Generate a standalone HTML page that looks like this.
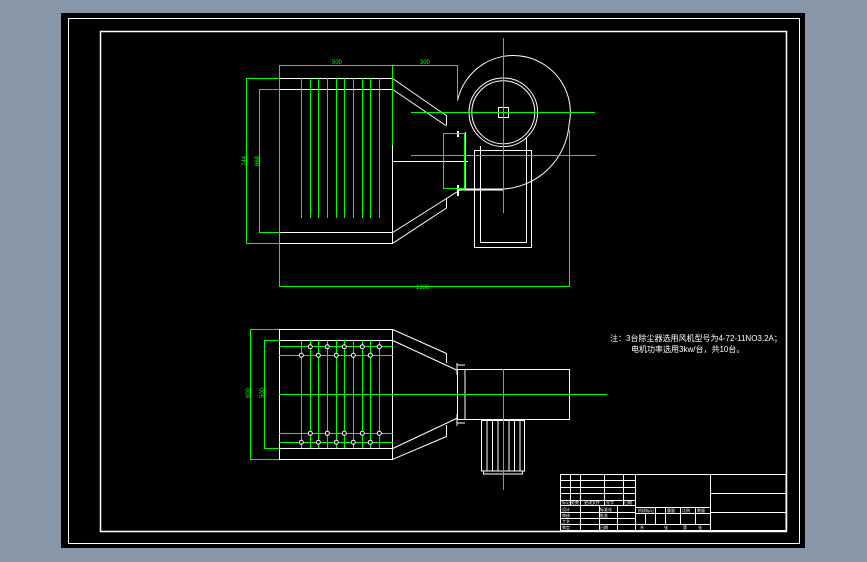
<!DOCTYPE html>
<html><head><meta charset="utf-8"><style>
html,body{margin:0;padding:0;background:#8a97a8;}
svg{display:block}
text{font-family:"Liberation Sans","Noto Sans CJK SC",sans-serif;}
</style></head><body>
<svg width="867" height="562" viewBox="0 0 867 562" xmlns="http://www.w3.org/2000/svg">
<rect x="0" y="0" width="867" height="562" fill="#8a97a8"/>
<rect x="61" y="13" width="744" height="535" fill="#000"/>
<g fill="none" stroke="#fff" stroke-width="1">
<rect x="68.5" y="18.5" width="731" height="525" />
</g>
<g fill="none" stroke="#fff" stroke-width="1.5">
<rect x="100.5" y="31.5" width="686" height="500"/>
</g>

<!-- TOP VIEW -->
<g fill="none" stroke="#fff" stroke-width="1">
<rect x="279.5" y="78.5" width="113" height="165"/>
<line x1="279" y1="89.5" x2="393" y2="89.5"/>
<line x1="279" y1="232.5" x2="393" y2="232.5"/>
<polyline points="392.7,78.5 441,112 446.5,115.5 446.5,125"/>
<polyline points="392.7,89.5 446.5,126"/>
<polyline points="392.7,243.3 446.5,208 446.5,198"/>
<polyline points="392.7,232.5 460,190"/>
<line x1="392.7" y1="161.5" x2="468" y2="161.5"/>
<line x1="465.5" y1="132" x2="465.5" y2="190"/>
<line x1="458" y1="131" x2="458" y2="137" stroke-width="2"/>
<line x1="458" y1="185" x2="458" y2="196" stroke-width="2"/>
<line x1="458" y1="189.5" x2="503" y2="189.5" stroke-width="2"/>
<path d="M457.7,100 A56,56 0 0,1 569,125 A70,70 0 0,1 503,189" />
<circle cx="503.3" cy="112.3" r="34.3"/>
<circle cx="503.3" cy="112.3" r="31.5"/>
<rect x="498.5" y="107.5" width="10" height="10"/>
<rect x="474.5" y="150.5" width="57" height="97"/>
<polyline points="480.5,146 480.5,242.5 526.5,242.5 526.5,138"/>
</g>
<g fill="none" stroke="#0f0" stroke-width="1">
<line x1="301.5" y1="78" x2="301.5" y2="218"/>
<line x1="310.5" y1="78" x2="310.5" y2="218"/>
<line x1="318.5" y1="78" x2="318.5" y2="218"/>
<line x1="327.5" y1="78" x2="327.5" y2="218"/>
<line x1="336.5" y1="78" x2="336.5" y2="218"/>
<line x1="344.5" y1="78" x2="344.5" y2="218"/>
<line x1="353.5" y1="78" x2="353.5" y2="218"/>
<line x1="362.5" y1="78" x2="362.5" y2="218"/>
<line x1="370.5" y1="78" x2="370.5" y2="218"/>
<line x1="379.5" y1="78" x2="379.5" y2="218"/>
<line x1="279" y1="65.5" x2="458" y2="65.5"/>
<line x1="279.5" y1="65" x2="279.5" y2="286"/>
<line x1="392.5" y1="65" x2="392.5" y2="145"/>
<line x1="457.5" y1="65" x2="457.5" y2="101"/>
<line x1="279" y1="286.5" x2="570" y2="286.5"/>
<line x1="569.5" y1="130" x2="569.5" y2="286"/>
<polyline points="279,78.5 246.5,78.5 246.5,243.5 279,243.5"/>
<polyline points="279,89.5 259.5,89.5 259.5,232.5 279,232.5"/>
<rect x="443.5" y="133.5" width="21" height="55"/>
<line x1="411" y1="112.5" x2="595" y2="112.5"/>
<line x1="411" y1="155.5" x2="596" y2="155.5"/>
<line x1="503.5" y1="38" x2="503.5" y2="213"/>
</g>
<g fill="#0f0" font-size="6">
<text x="332" y="64">500</text>
<text x="420" y="64">300</text>
<text x="416" y="289">1336</text>
<text x="0" y="0" transform="translate(246,166) rotate(-90)">744</text>
<text x="0" y="0" transform="translate(259,166) rotate(-90)">668</text>
</g>

<!-- BOTTOM VIEW -->
<g fill="none" stroke="#fff" stroke-width="1">
<rect x="279.5" y="329.5" width="113" height="130"/>
<line x1="279" y1="340.5" x2="393" y2="340.5"/>
<line x1="279" y1="448.5" x2="393" y2="448.5"/>
<polyline points="392.7,329.5 446.5,353.5 446.5,363"/>
<polyline points="392.7,340.5 456.5,370"/>
<polyline points="392.7,459.3 446.5,436.5 446.5,425"/>
<polyline points="392.7,448.5 456.5,418.5"/>
<rect x="457.5" y="369.5" width="7.5" height="50"/>
<rect x="465" y="369.5" width="104.5" height="50"/>
<path d="M457,363v12 M457,365h8 M457,414v12 M457,423h8" />
<rect x="481.5" y="420.5" width="43" height="50.5"/>
<path d="M487,421v50 M492.5,421v50 M498,421v50 M503.5,421v50 M509,421v50 M514.5,421v50 M520,421v50"/>
<path d="M483.5,471v3h39v-3"/>
</g>
<g fill="none" stroke="#0f0" stroke-width="1">
<line x1="301.5" y1="340" x2="301.5" y2="448"/>
<line x1="310.5" y1="340" x2="310.5" y2="448"/>
<line x1="318.5" y1="340" x2="318.5" y2="448"/>
<line x1="327.5" y1="340" x2="327.5" y2="448"/>
<line x1="336.5" y1="340" x2="336.5" y2="448"/>
<line x1="344.5" y1="340" x2="344.5" y2="448"/>
<line x1="353.5" y1="340" x2="353.5" y2="448"/>
<line x1="362.5" y1="340" x2="362.5" y2="448"/>
<line x1="370.5" y1="340" x2="370.5" y2="448"/>
<line x1="379.5" y1="340" x2="379.5" y2="448"/>
<line x1="279" y1="346.5" x2="393" y2="346.5"/>
<line x1="279" y1="355.5" x2="393" y2="355.5"/>
<line x1="279" y1="433.5" x2="393" y2="433.5"/>
<line x1="279" y1="442.5" x2="393" y2="442.5"/>
<line x1="279" y1="394.5" x2="607" y2="394.5"/>
<polyline points="279,329.5 250.5,329.5 250.5,459.5 279,459.5"/>
<polyline points="279,340.5 264.5,340.5 264.5,448.5 279,448.5"/>
<line x1="503.5" y1="369" x2="503.5" y2="490"/>
</g>
<g fill="#000" stroke="#fff" stroke-width="1">
<circle cx="310.3" cy="346.7" r="2"/><circle cx="327.3" cy="346.7" r="2"/><circle cx="344.3" cy="346.7" r="2"/><circle cx="362.3" cy="346.7" r="2"/><circle cx="379.3" cy="346.7" r="2"/>
<circle cx="301.3" cy="355.3" r="2"/><circle cx="318.3" cy="355.3" r="2"/><circle cx="336.3" cy="355.3" r="2"/><circle cx="353.3" cy="355.3" r="2"/><circle cx="370.3" cy="355.3" r="2"/>
<circle cx="310.3" cy="433.3" r="2"/><circle cx="327.3" cy="433.3" r="2"/><circle cx="344.3" cy="433.3" r="2"/><circle cx="362.3" cy="433.3" r="2"/><circle cx="379.3" cy="433.3" r="2"/>
<circle cx="301.3" cy="442.3" r="2"/><circle cx="318.3" cy="442.3" r="2"/><circle cx="336.3" cy="442.3" r="2"/><circle cx="353.3" cy="442.3" r="2"/><circle cx="370.3" cy="442.3" r="2"/>
</g>
<g fill="#0f0" font-size="6">
<text x="0" y="0" transform="translate(250,398) rotate(-90)">600</text>
<text x="0" y="0" transform="translate(264,398) rotate(-90)">500</text>
</g>

<!-- NOTE -->
<g fill="#fff" font-size="8">
<text x="610" y="341">注：3台除尘器选用风机型号为4-72-11NO3.2A；</text>
<text x="631" y="352">电机功率选用3kw/台，共10台。</text>
</g>

<!-- TITLE BLOCK -->
<g fill="none" stroke="#fff" stroke-width="1">
<rect x="560.5" y="474.5" width="225.5" height="56"/>
<line x1="635.5" y1="474" x2="635.5" y2="531"/>
<line x1="710.5" y1="474" x2="710.5" y2="531"/>
<line x1="710" y1="493.5" x2="786" y2="493.5"/>
<line x1="710" y1="512.5" x2="786" y2="512.5"/>
<line x1="635" y1="507.5" x2="710" y2="507.5"/>
<line x1="635" y1="513.5" x2="710" y2="513.5"/>
<line x1="635" y1="524.5" x2="710" y2="524.5"/>
<line x1="645.5" y1="513" x2="645.5" y2="524"/>
<line x1="655.5" y1="507" x2="655.5" y2="524"/>
<line x1="665.5" y1="507" x2="665.5" y2="524"/>
<line x1="680.5" y1="507" x2="680.5" y2="524"/>
<line x1="695.5" y1="507" x2="695.5" y2="524"/>
<line x1="560" y1="480.5" x2="635" y2="480.5"/>
<line x1="560" y1="487.5" x2="635" y2="487.5"/>
<line x1="560" y1="493.5" x2="635" y2="493.5"/>
<line x1="560" y1="500.5" x2="635" y2="500.5"/>
<line x1="560" y1="505.5" x2="635" y2="505.5"/>
<line x1="560" y1="512.5" x2="635" y2="512.5"/>
<line x1="560" y1="518.5" x2="635" y2="518.5"/>
<line x1="560" y1="524.5" x2="635" y2="524.5"/>
<line x1="570.5" y1="474" x2="570.5" y2="505"/>
<line x1="580.5" y1="474" x2="580.5" y2="531"/>
<line x1="604.5" y1="474" x2="604.5" y2="505"/>
<line x1="623.5" y1="474" x2="623.5" y2="505"/>
<line x1="599.5" y1="505" x2="599.5" y2="531"/>
<line x1="617.5" y1="505" x2="617.5" y2="531"/>
</g>
<g fill="#fff" font-size="4">
<text x="562" y="504">标记 处数</text><text x="584" y="504">更改文件</text><text x="606" y="504">签字</text><text x="624" y="504">日期</text>
<text x="562" y="511">设计</text><text x="600" y="511">标准化</text>
<text x="562" y="517">审核</text><text x="600" y="517">批准</text>
<text x="562" y="523">工艺</text>
<text x="562" y="529">审定</text><text x="600" y="529">日期</text>
<text x="638" y="512">阶段标记</text><text x="667" y="512">重量</text><text x="682" y="512">比例</text><text x="697" y="512">数量</text>
<text x="640" y="529">共</text><text x="664" y="529">张</text><text x="683" y="529">第</text><text x="698" y="529">张</text>
</g>
</svg>
</body></html>
